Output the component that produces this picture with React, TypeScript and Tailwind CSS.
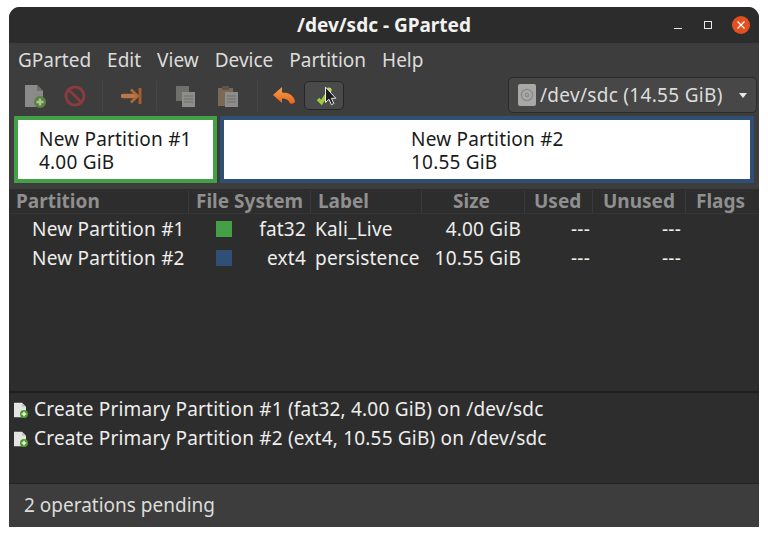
import React from "react";

const font = { fontFamily: '"Noto Sans", sans-serif' };

function NewIcon({ small = false }: { small?: boolean }) {
  return (
    <svg width={small ? 16 : 24} height={small ? 16 : 24} viewBox={small ? "2 0 23 24" : "0 0 24 24"}>
      <path d="M3 1h12l6 6v16H3z" fill={small ? "#e4e4e2" : "#8a8a88"} />
      <path d="M15 1l6 6h-6z" fill={small ? "#bcbcb8" : "#6f6f6d"} />
      <circle cx="18" cy="18" r="6" fill={small ? "#4f9a2e" : "#5d7f45"} />
      <path d="M18 14.5v7M14.5 18h7" stroke={small ? "#eaf5dc" : "#a8c68c"} strokeWidth="2.4" />
    </svg>
  );
}

function StopIcon() {
  return (
    <svg width="24" height="24" viewBox="0 0 24 24" fill="none">
      <circle cx="12" cy="12" r="9" stroke="#8b3a3e" strokeWidth="3" />
      <path d="M6 6l12 12" stroke="#8b3a3e" strokeWidth="3" />
    </svg>
  );
}

function ResizeIcon() {
  return (
    <svg width="24" height="24" viewBox="0 0 24 24" fill="none">
      <path d="M4 12h13" stroke="#b8794a" strokeWidth="4.5" strokeLinecap="round" />
      <path d="M12 5.5l6.5 6.5-6.5 6.5" stroke="#b06a3a" strokeWidth="2.6" />
      <path d="M21 4v16" stroke="#a85c2c" strokeWidth="3" />
    </svg>
  );
}

function CopyIcon() {
  return (
    <svg width="24" height="24" viewBox="0 0 24 24">
      <rect x="3" y="2" width="13" height="15" fill="#6f6f6d" />
      <rect x="9" y="8" width="13" height="15" fill="#8d8d8b" />
      <path d="M11 12h9M11 15h9M11 18h9" stroke="#6c6c6a" strokeWidth="1" />
    </svg>
  );
}

function PasteIcon() {
  return (
    <svg width="24" height="24" viewBox="0 0 24 24">
      <rect x="2" y="4" width="15" height="18" fill="#7a6a55" />
      <rect x="6" y="2" width="7" height="4" fill="#5f5446" />
      <rect x="9" y="8" width="13" height="15" fill="#8d8d8b" />
      <path d="M11 12h9M11 15h9M11 18h9" stroke="#6c6c6a" strokeWidth="1" />
    </svg>
  );
}

function UndoIcon() {
  return (
    <svg width="24" height="24" viewBox="0 0 24 24">
      <defs>
        <linearGradient id="undoFill" x1="0" y1="0" x2="0" y2="1">
          <stop offset="0" stopColor="#f5a04a" />
          <stop offset="1" stopColor="#e8641c" />
        </linearGradient>
      </defs>
      <path
        d="M10 3L1 11l9 8v-4.6c3.6 0 6 .8 8 4.8 1.6 1 4.4.6 5-1.6-.8-6-6-9.2-13-9.2z"
        fill="url(#undoFill)"
      />
    </svg>
  );
}

function ApplyIcon() {
  return (
    <svg width="26" height="24" viewBox="0 0 26 24" fill="none">
      <path d="M7 15l3.5 3.5L18 7" stroke="#9ccb3b" strokeWidth="3.6" />
      <circle cx="18" cy="6" r="2.6" fill="#b6dc54" />
      <path
        d="M14.5 3v15.5l3.5-3.2 2.4 5.4 2.4-1.2-2.4-5.2h4.4z"
        fill="#1c1c1c"
        stroke="#e8e8e8"
        strokeWidth="1"
      />
    </svg>
  );
}

function Sep() {
  return <div className="h-[30px] w-px bg-[#454545]" />;
}

function HeaderCell({ w, children }: { w: string; children?: React.ReactNode }) {
  return (
    <div className={`${w} h-full flex items-center border-r border-[#3a3a3a] px-[7px] shrink-0`}>
      {children}
    </div>
  );
}

function Row({ name, color, fs, label, size }: { name: string; color: string; fs: string; label: string; size: string }) {
  return (
    <div className="flex h-[29px] pt-[1px] items-center text-[19px] tracking-[0.2px] text-[#eeeeec] whitespace-nowrap">
      <div className="w-[180px] shrink-0 pl-[23px]">{name}</div>
      <div className={`w-[16px] h-[16px] ml-[27px] shrink-0 ${color}`} />
      <div className="w-[74px] shrink-0 text-right">{fs}</div>
      <div className="w-[120px] shrink-0 pl-[9px]">{label}</div>
      <div className="w-[95px] shrink-0 text-right">{size}</div>
      <div className="w-[69px] shrink-0 text-right">---</div>
      <div className="w-[91px] shrink-0 text-right">---</div>
    </div>
  );
}

export default function App() {
  return (
    <div className="w-[768px] h-[536px] bg-white overflow-hidden pl-[9px] pt-[7px]" style={font}>
      <div className="w-[750px] h-[520px] rounded-t-[11px] overflow-hidden bg-[#3d3d3d] flex flex-col">
        {/* Title bar */}
        <div className="h-[36px] shrink-0 bg-[#2c2c2c] flex items-center pt-[1px] relative">
          <div className="flex-1 text-center font-bold text-[19px] text-[#f2f2f0]">/dev/sdc - GParted</div>
          <div className="absolute right-[9px] top-[9px] flex items-center">
            <div className="w-[8px] h-[1px] bg-[#e8e8e8] mt-[7px]" />
            <div className="w-[8px] h-[8px] ml-[22px] border border-[#e8e8e8]" />
            <div className="w-[18px] h-[18px] ml-[20px] rounded-full bg-[#e2501f] flex items-center justify-center">
              <svg width="10" height="10" viewBox="0 0 10 10" stroke="#fff" strokeWidth="1.2">
                <path d="M1.5 1.5l7 7M8.5 1.5l-7 7" />
              </svg>
            </div>
          </div>
        </div>

        {/* Menu */}
        <div className="h-[33px] shrink-0 flex items-center pl-[9px] pt-[1px] gap-[16px] text-[19px] text-[#dcdcda]">
          <span>GParted</span>
          <span>Edit</span>
          <span>View</span>
          <span>Device</span>
          <span>Partition</span>
          <span>Help</span>
        </div>

        {/* Toolbar */}
        <div className="h-[39px] shrink-0 flex items-center pl-[13px] pr-[2px] text-[#dcdcda]">
          <NewIcon />
          <div className="ml-[17px]"><StopIcon /></div>
          <div className="ml-[15px]"><Sep /></div>
          <div className="ml-[16px]"><ResizeIcon /></div>
          <div className="ml-[13px]"><Sep /></div>
          <div className="ml-[16px]"><CopyIcon /></div>
          <div className="ml-[19px]"><PasteIcon /></div>
          <div className="ml-[17px]"><Sep /></div>
          <div className="ml-[14px]"><UndoIcon /></div>
          <div className="ml-[8px] w-[40px] h-[29px] rounded-[5px] border border-[#262626] bg-[#4a4a4a] flex items-center justify-center">
            <ApplyIcon />
          </div>
          <div className="ml-auto w-[249px] h-[36px] rounded-[5px] border border-[#2b2b2b] bg-[#474747] flex items-center pl-[9px] pr-[9px] -mt-[1px]">
            <div className="w-[18px] h-[22px] rounded-[2px] bg-[#a8a8a6] flex items-center justify-center shrink-0">
              <svg width="14" height="14" viewBox="0 0 14 14" fill="none" stroke="#878785" strokeWidth="1.2">
                <circle cx="7" cy="7" r="5.6" />
                <circle cx="7" cy="7" r="1.6" />
              </svg>
            </div>
            <span className="ml-[4px] text-[19px] tracking-[0.3px] whitespace-nowrap text-[#dddddb]">/dev/sdc (14.55 GiB)</span>
            <div className="ml-auto w-0 h-0 border-l-[4.5px] border-r-[4.5px] border-t-[5px] border-l-transparent border-r-transparent border-t-[#e8e8e8]" />
          </div>
        </div>

        {/* Partition map */}
        <div className="h-[70px] shrink-0 flex gap-[3px] px-[5px] pt-[1px] text-[19px] tracking-[0.2px] text-[#1a1a1a] leading-[23px]">
          <div className="w-[203px] h-[67px] bg-white border-[4px] border-[#43a047] pl-[21px] pt-[8px] whitespace-nowrap">
            <div>New Partition #1</div>
            <div>4.00 GiB</div>
          </div>
          <div className="w-[534px] h-[67px] bg-white border-[4px] border-[#2f4f74] pl-[187px] pt-[8px] whitespace-nowrap">
            <div>New Partition #2</div>
            <div>10.55 GiB</div>
          </div>
        </div>

        {/* Tree */}
        <div className="h-[207px] shrink-0 mt-[-1px] bg-[#2d2d2d] border-t-[5px] border-[#3d3d3d]">
          <div className="h-[25px] pt-[1px] flex items-center font-bold text-[19px] text-[#8f8f8f] border-b border-[#363636] whitespace-nowrap">
            <HeaderCell w="w-[180px]">Partition</HeaderCell>
            <HeaderCell w="w-[122px]">File System</HeaderCell>
            <HeaderCell w="w-[111px]">Label</HeaderCell>
            <HeaderCell w="w-[103px]"><span className="ml-[24px]">Size</span></HeaderCell>
            <HeaderCell w="w-[68px]"><span className="ml-[2px]">Used</span></HeaderCell>
            <HeaderCell w="w-[93px]"><span className="ml-[3px]">Unused</span></HeaderCell>
            <div className="flex-1 pl-[10px]">Flags</div>
          </div>
          <Row name="New Partition #1" color="bg-[#43a047]" fs="fat32" label="Kali_Live" size="4.00 GiB" />
          <Row name="New Partition #2" color="bg-[#2f4f74]" fs="ext4" label="persistence" size="10.55 GiB" />
        </div>

        {/* Log */}
        <div className="h-[93px] shrink-0 bg-[#2d2d2d] border-t-[2px] border-b border-t-[#1e1e1e] border-b-[#232323] pt-[2px] text-[19px] tracking-[0.2px] text-[#eeeeec]">
          <div className="flex items-center h-[29px] pl-[4px] gap-[5px] whitespace-nowrap">
            <NewIcon small />
            <span>Create Primary Partition #1 (fat32, 4.00 GiB) on /dev/sdc</span>
          </div>
          <div className="flex items-center h-[29px] pl-[4px] gap-[5px] whitespace-nowrap">
            <NewIcon small />
            <span>Create Primary Partition #2 (ext4, 10.55 GiB) on /dev/sdc</span>
          </div>
        </div>

        {/* Status */}
        <div className="flex-1 flex items-center pl-[15px] text-[19px] text-[#dcdcda]">2 operations pending</div>
      </div>
    </div>
  );
}
